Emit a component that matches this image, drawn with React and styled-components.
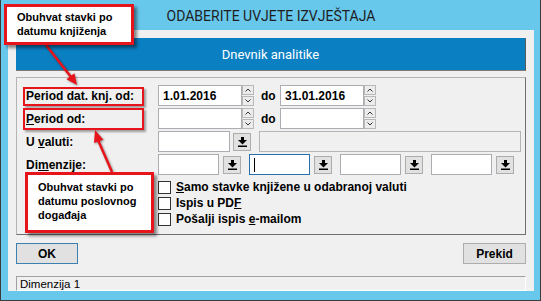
import React from 'react';
import styled, { createGlobalStyle } from 'styled-components';

const GlobalStyle = createGlobalStyle`
  html, body { margin: 0; padding: 0; background: #ffffff; }
  body { font-family: "Liberation Sans", Arial, sans-serif; color: #000; }
  *, *::before, *::after { box-sizing: border-box; }
`;

const Stage = styled.div`
  position: relative;
  width: 541px;
  height: 301px;
  overflow: hidden;
`;

const Window = styled.div`
  width: 541px;
  height: 301px;
  display: flex;
  flex-direction: column;
  background: #68c8ec;
  border-left: 1px solid #3b3b3b;
  border-right: 1px solid #3b3b3b;
  border-bottom: 1px solid #3b3b3b;
  padding: 0 6px 9px 7px;
`;

const TitleBar = styled.div`
  height: 30px;
  flex: none;
  display: flex;
  align-items: center;
  justify-content: center;
  font-family: Roboto, "Liberation Sans", sans-serif;
  font-size: 14px;
  color: #1e1e1e;
  padding-top: 1px;
`;

const Client = styled.div`
  flex: 1;
  background: #f0f0f0;
  padding: 8px 8px 0 8px;
  display: flex;
  flex-direction: column;
`;

const Header = styled.div`
  height: 33px;
  flex: none;
  background: #0a7fc2;
  border-right: 1px solid #5c5c5c;
  border-bottom: 1px solid #7c7c7c;
  color: #ffffff;
  font-family: Roboto, "Liberation Sans", sans-serif;
  font-size: 13px;
  display: flex;
  align-items: center;
  justify-content: center;
`;

const Panel = styled.div`
  margin-top: 6px;
  height: 158px;
  flex: none;
  border: 1px solid;
  border-color: #b4b4b4 #6f6f6f #6f6f6f #b4b4b4;
  padding: 7px 0 0 9px;
  display: flex;
  flex-direction: column;
`;

const FieldRow = styled.div`
  display: flex;
  align-items: center;
  height: 21px;
  flex: none;
  & + & { margin-top: 2px; }
`;

const Label = styled.div`
  width: 132px;
  flex: none;
  font-weight: bold;
  font-size: 12px;
`;

const DoLabel = styled.div`
  width: 26px;
  flex: none;
  padding-left: 7px;
  font-weight: bold;
  font-size: 12px;
`;

const TextBox = styled.div`
  width: ${(p) => p.$w}px;
  height: 21px;
  flex: none;
  background: #ffffff;
  border: 1px solid ${(p) => (p.$focus ? '#2a6fb0' : '#abadb3')};
  font-weight: bold;
  font-size: 12px;
  padding-left: 4px;
  display: flex;
  align-items: center;
  margin-right: ${(p) => p.$mr || 0}px;
`;

const Caret = styled.span`
  width: 1px;
  height: 14px;
  background: #000;
`;

const DisabledBox = styled.div`
  width: ${(p) => p.$w}px;
  height: 21px;
  flex: none;
  background: #f0f0f0;
  border: 1px solid #b5b5b5;
`;

const Spinner = styled.div`
  width: 12px;
  height: 21px;
  flex: none;
  display: flex;
  flex-direction: column;
  gap: 1px;
`;

const SpinBtn = styled.div`
  flex: 1;
  border: 1px solid #b8b8b8;
  background: #ececec;
  display: flex;
  align-items: center;
  justify-content: center;
`;

const DropBtn = styled.div`
  width: 18px;
  height: 18px;
  flex: none;
  border: 1px solid #adadad;
  background: #e1e1e1;
  display: flex;
  align-items: center;
  justify-content: center;
  margin-right: ${(p) => p.$mr || 0}px;
`;

const CheckList = styled.div`
  margin-top: 5px;
  padding-left: 132px;
  display: flex;
  flex-direction: column;
`;

const CheckRow = styled.div`
  height: 16px;
  display: flex;
  align-items: flex-start;
  font-weight: bold;
  font-size: 12px;
`;

const CheckBox = styled.span`
  width: 13px;
  height: 13px;
  margin-top: 1px;
  flex: none;
  border: 1px solid #333333;
  background: #ffffff;
`;

const CheckText = styled.span`
  margin-left: 5px;
  line-height: 15px;
`;

const ButtonRow = styled.div`
  margin-top: 8px;
  height: 21px;
  flex: none;
  display: flex;
  justify-content: space-between;
`;

const Button = styled.button`
  width: ${(p) => p.$w}px;
  height: 21px;
  padding: 0;
  border: 1px solid ${(p) => (p.$default ? '#3c7fb1' : '#adadad')};
  background: #e1e1e1;
  font-family: "Liberation Sans", Arial, sans-serif;
  font-weight: bold;
  font-size: 12px;
  color: #000;
`;

const StatusBar = styled.div`
  margin-top: 12px;
  height: 15px;
  flex: none;
  border: 1px solid;
  border-color: #a0a0a0 #ffffff #ffffff #a0a0a0;
  font-size: 11.5px;
  padding-left: 3px;
  display: flex;
  align-items: center;
`;

/* annotation overlay */
const Callout = styled.div`
  position: absolute;
  left: ${(p) => p.$x}px;
  top: ${(p) => p.$y}px;
  width: ${(p) => p.$w}px;
  height: ${(p) => p.$h}px;
  background: #ffffff;
  border: 3px solid #e8141b;
  box-shadow: 3px 3px 3px rgba(0, 0, 0, 0.45);
  padding: ${(p) => p.$pt}px 0 0 ${(p) => p.$pl}px;
  font-weight: bold;
  font-size: 11px;
  line-height: 14px;
  color: #000;
`;

const Highlight = styled.div`
  position: absolute;
  left: ${(p) => p.$x}px;
  top: ${(p) => p.$y}px;
  width: ${(p) => p.$w}px;
  height: ${(p) => p.$h}px;
  border: 2px solid #e8141b;
  box-shadow: 2px 2px 2px rgba(0, 0, 0, 0.35);
`;

const ArrowLayer = styled.svg`
  position: absolute;
  left: 0;
  top: 0;
  pointer-events: none;
  filter: drop-shadow(1px 1px 1px rgba(0, 0, 0, 0.4));
`;

const ChevUp = () => (
  <svg width="6" height="4" viewBox="0 0 6 4">
    <path d="M0.5 3.5 L3 1 L5.5 3.5" fill="none" stroke="#333" strokeWidth="1" />
  </svg>
);
const ChevDown = () => (
  <svg width="6" height="4" viewBox="0 0 6 4">
    <path d="M0.5 0.5 L3 3 L5.5 0.5" fill="none" stroke="#333" strokeWidth="1" />
  </svg>
);

const DownGlyph = () => (
  <svg width="9" height="10" viewBox="0 0 9 10">
    <rect x="3" y="0" width="3" height="3" fill="#000" />
    <path d="M0 3 L9 3 L4.5 7.5 Z" fill="#000" />
    <rect x="0" y="8.5" width="9" height="1.5" fill="#000" />
  </svg>
);

const Spin = () => (
  <Spinner>
    <SpinBtn><ChevUp /></SpinBtn>
    <SpinBtn><ChevDown /></SpinBtn>
  </Spinner>
);

export default function App() {
  return (
    <Stage>
      <GlobalStyle />
      <Window>
        <TitleBar>ODABERITE UVJETE IZVJEŠTAJA</TitleBar>
        <Client>
          <Header>Dnevnik analitike</Header>
          <Panel>
            <FieldRow>
              <Label>Period dat. knj. od:</Label>
              <TextBox $w={84}>1.01.2016</TextBox>
              <Spin />
              <DoLabel>do</DoLabel>
              <TextBox $w={84}>31.01.2016</TextBox>
              <Spin />
            </FieldRow>
            <FieldRow>
              <Label><u>P</u>eriod od:</Label>
              <TextBox $w={84} />
              <Spin />
              <DoLabel>do</DoLabel>
              <TextBox $w={84} />
              <Spin />
            </FieldRow>
            <FieldRow>
              <Label>U <u>v</u>aluti:</Label>
              <TextBox $w={72} $mr={3} />
              <DropBtn $mr={8}><DownGlyph /></DropBtn>
              <DisabledBox $w={262} />
            </FieldRow>
            <FieldRow>
              <Label>Di<u>m</u>enzije:</Label>
              <TextBox $w={61} $mr={4} />
              <DropBtn $mr={8}><DownGlyph /></DropBtn>
              <TextBox $w={61} $mr={4} $focus><Caret /></TextBox>
              <DropBtn $mr={8}><DownGlyph /></DropBtn>
              <TextBox $w={61} $mr={4} />
              <DropBtn $mr={8}><DownGlyph /></DropBtn>
              <TextBox $w={61} $mr={4} />
              <DropBtn><DownGlyph /></DropBtn>
            </FieldRow>
            <CheckList>
              <CheckRow>
                <CheckBox />
                <CheckText><u>S</u>amo stavke knjižene u odabranoj valuti</CheckText>
              </CheckRow>
              <CheckRow>
                <CheckBox />
                <CheckText>Ispis u PD<u>F</u></CheckText>
              </CheckRow>
              <CheckRow>
                <CheckBox />
                <CheckText>Pošalji ispis <u>e</u>-mailom</CheckText>
              </CheckRow>
            </CheckList>
          </Panel>
          <ButtonRow>
            <Button $w={62} $default>OK</Button>
            <Button $w={63}>Prekid</Button>
          </ButtonRow>
          <StatusBar>Dimenzija 1</StatusBar>
        </Client>
      </Window>

      <Highlight $x={23} $y={87} $w={121} $h={19} />
      <Highlight $x={23} $y={108} $w={121} $h={22} />

      <ArrowLayer width="541" height="301" viewBox="0 0 541 301">
        <line x1="46" y1="45" x2="71" y2="77" stroke="#e8141b" strokeWidth="2.5" />
        <path d="M77 85 L66.4 79.2 L74.4 73.2 Z" fill="#e8141b" />
        <line x1="112" y1="172" x2="98" y2="140" stroke="#e8141b" strokeWidth="2.5" />
        <path d="M95 130 L103.4 139.7 L94 143.1 Z" fill="#e8141b" />
      </ArrowLayer>

      <Callout $x={4} $y={4} $w={130} $h={41} $pt={3} $pl={10}>
        Obuhvat stavki po<br />datumu knjiženja
      </Callout>
      <Callout $x={25} $y={172} $w={129} $h={61} $pt={5} $pl={10}>
        Obuhvat stavki po<br />datumu poslovnog<br />događaja
      </Callout>
    </Stage>
  );
}
